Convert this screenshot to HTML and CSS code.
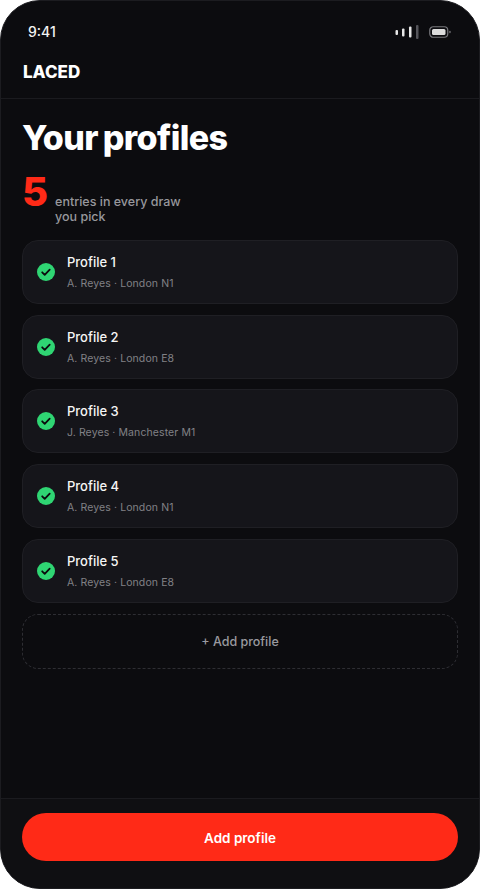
FILE: index.html
```html
<!DOCTYPE html>
<html>
<head>
    <meta charset="UTF-8">
    <title>Your profiles - Laced</title>
    <link rel="stylesheet" href="styles.css">
</head>
<body>
<section class="phone">
    <div class="status">
        <span class="time">9:41</span>
        <div class="statusIcons">
            <svg width="24" height="14" viewBox="0 0 24 14">
                <rect x="0.5" y="5" width="2.5" height="5" rx="1" fill="#e8e8e8"/>
                <rect x="7" y="3.500" width="2.500" height="8" rx="1" fill="#e8e8e8"/>
                <rect x="14" y="1.500" width="2.500" height="11" rx="1" fill="#e8e8e8"/>
                <rect x="21" y="0" width="2.500" height="14" rx="1" fill="#55555a"/>
            </svg>
            <svg width="22" height="12" viewBox="0 0 22 12">
                <rect x="0.750" y="0.750" width="18" height="10.500" rx="3.500" fill="none" stroke="#77777b" stroke-width="1.200"/>
                <rect x="3" y="3" width="13.500" height="6" rx="1.500" fill="#dcdcdc"/>
                <rect x="20.300" y="4.800" width="1.300" height="2.400" rx="0.600" fill="#77777b"/>
            </svg>
        </div>
    </div>

    <header class="brand">LACED</header>

    <main class="content">
        <h1 class="title">Your profiles</h1>

        <div class="entries">
            <span class="entriesNum">5</span>
            <span class="entriesText">entries in every draw<br>you pick</span>
        </div>

        <ul class="list">
            <li class="card">
                <svg class="check" viewBox="0 0 18 18"><circle cx="9" cy="9" r="9" fill="#2fd573"/><path d="M5.200 9.300l2.500 2.500 5-5.200" fill="none" stroke="#0b0b0e" stroke-width="1.800" stroke-linecap="round" stroke-linejoin="round"/></svg>
                <div class="cardText">
                    <div class="cardName">Profile 1</div>
                    <div class="cardSub">A. Reyes · London N1</div>
                </div>
            </li>
            <li class="card">
                <svg class="check" viewBox="0 0 18 18"><circle cx="9" cy="9" r="9" fill="#2fd573"/><path d="M5.200 9.300l2.500 2.500 5-5.200" fill="none" stroke="#0b0b0e" stroke-width="1.800" stroke-linecap="round" stroke-linejoin="round"/></svg>
                <div class="cardText">
                    <div class="cardName">Profile 2</div>
                    <div class="cardSub">A. Reyes · London E8</div>
                </div>
            </li>
            <li class="card">
                <svg class="check" viewBox="0 0 18 18"><circle cx="9" cy="9" r="9" fill="#2fd573"/><path d="M5.200 9.300l2.500 2.500 5-5.200" fill="none" stroke="#0b0b0e" stroke-width="1.800" stroke-linecap="round" stroke-linejoin="round"/></svg>
                <div class="cardText">
                    <div class="cardName">Profile 3</div>
                    <div class="cardSub">J. Reyes · Manchester M1</div>
                </div>
            </li>
            <li class="card">
                <svg class="check" viewBox="0 0 18 18"><circle cx="9" cy="9" r="9" fill="#2fd573"/><path d="M5.200 9.300l2.500 2.500 5-5.200" fill="none" stroke="#0b0b0e" stroke-width="1.800" stroke-linecap="round" stroke-linejoin="round"/></svg>
                <div class="cardText">
                    <div class="cardName">Profile 4</div>
                    <div class="cardSub">A. Reyes · London N1</div>
                </div>
            </li>
            <li class="card">
                <svg class="check" viewBox="0 0 18 18"><circle cx="9" cy="9" r="9" fill="#2fd573"/><path d="M5.200 9.300l2.500 2.500 5-5.200" fill="none" stroke="#0b0b0e" stroke-width="1.800" stroke-linecap="round" stroke-linejoin="round"/></svg>
                <div class="cardText">
                    <div class="cardName">Profile 5</div>
                    <div class="cardSub">A. Reyes · London E8</div>
                </div>
            </li>
        </ul>

        <div class="addRow">+ Add profile</div>
    </main>

    <footer class="footer">
        <div class="addBtn">Add profile</div>
    </footer>
</section>
</body>
</html>
```

FILE: styles.css
```css
* {
    margin: 0;
    padding: 0;
    box-sizing: border-box;
    font-family: Inter, "Liberation Sans", sans-serif;
}

html, body {
    width: 480px;
    height: 889px;
    overflow: hidden;
    background: #fff;
}

.phone {
    display: flex;
    flex-direction: column;
    width: 480px;
    height: 889px;
    border-radius: 40px;
    background: #0c0c0f;
    border: 1px solid #1c1c20;
    overflow: hidden;
}

.status {
    display: flex;
    justify-content: space-between;
    align-items: center;
    height: 49px;
    padding: 12px 27px 0 27px;
    flex-shrink: 0;
}

.time {
    font-size: 14px;
    font-weight: 500;
    color: #f2f2f2;
}

.statusIcons {
    display: flex;
    align-items: center;
    gap: 10px;
    margin-right: 1px;
}

.brand {
    height: 49px;
    padding: 5px 22px 0;
    border-bottom: 1px solid #1b1b1f;
    font-size: 17px;
    line-height: 34px;
    font-weight: 800;
    color: #fff;
    flex-shrink: 0;
}

.content {
    flex: 1;
    padding: 17px 21px 0;
}

.title {
    font-size: 34px;
    line-height: 44px;
    font-weight: 800;
    letter-spacing: -0.6px;
    word-spacing: -2px;
    color: #fff;
}

.entries {
    display: flex;
    align-items: flex-start;
    gap: 7px;
    margin-top: 11px;
}

.entriesNum {
    font-size: 40px;
    line-height: 42px;
    font-weight: 800;
    color: #ff2a17;
}

.entriesText {
    margin-top: 23px;
    font-size: 12.500px;
    line-height: 15px;
    font-weight: 500;
    color: #98989d;
}

.list {
    display: flex;
    flex-direction: column;
    gap: 10.67px;
    margin-top: 16px;
    list-style: none;
}

.card {
    display: flex;
    align-items: center;
    gap: 12px;
    height: 64px;
    padding: 0 14px;
    border: 1px solid #1f1f24;
    border-radius: 16px;
    background: #15151a;
}

.check {
    width: 18px;
    height: 18px;
    flex-shrink: 0;
}

.cardName {
    font-size: 13px;
    line-height: 18px;
    font-weight: 500;
    color: #f5f5f5;
}

.cardSub {
    margin-top: 6px;
    font-size: 10.500px;
    line-height: 14px;
    letter-spacing: 0.1px;
    color: #818186;
}

.addRow {
    display: flex;
    justify-content: center;
    align-items: center;
    height: 55px;
    margin-top: 11px;
    border: 1px dashed #2e2e33;
    border-radius: 16px;
    font-size: 12.500px;
    font-weight: 500;
    color: #9a9a9f;
}

.footer {
    height: 90px;
    padding: 14px 21px 0;
    border-top: 1px solid #1b1b1f;
    background: #0f0f12;
    flex-shrink: 0;
}

.addBtn {
    height: 48px;
    line-height: 50px;
    text-align: center;
    border-radius: 24px;
    background: #ff2a17;
    font-size: 13.500px;
    font-weight: 600;
    color: #fff;
}
```
